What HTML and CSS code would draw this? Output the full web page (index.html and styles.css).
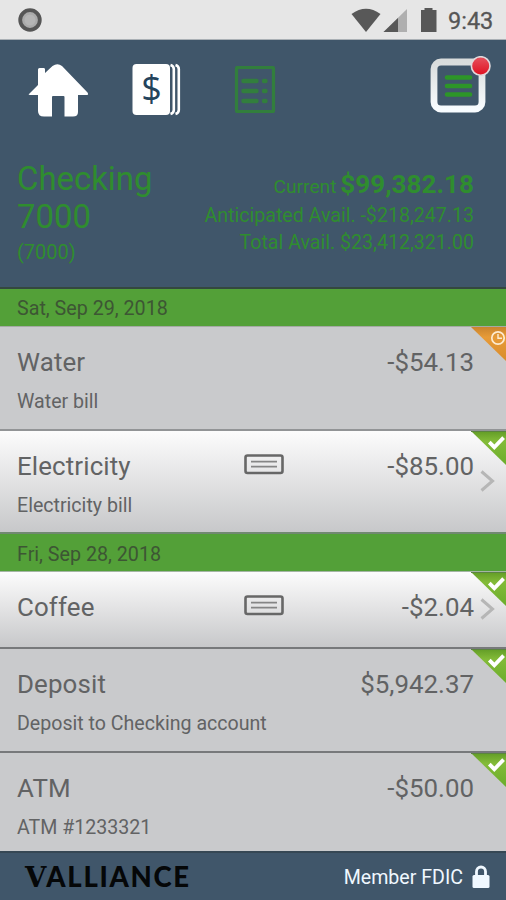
FILE: index.html
```html
<!DOCTYPE html>
<html lang="en">
<head>
<meta charset="utf-8">
<title>Checking 7000</title>
<link rel="stylesheet" href="styles.css">
</head>
<body>
<svg class="defs" aria-hidden="true">
  <defs>
    <linearGradient id="green" x1="0" y1="0" x2="0" y2="1"><stop offset="0" stop-color="#629c26"/><stop offset=".3" stop-color="#83bb38"/><stop offset="1" stop-color="#6bad2b"/></linearGradient>
    <linearGradient id="orange" x1="0" y1="0" x2="0" y2="1"><stop offset="0" stop-color="#c9842e"/><stop offset=".3" stop-color="#e79b38"/><stop offset="1" stop-color="#d98c2c"/></linearGradient>
    <linearGradient id="frame" x1="0" y1="0" x2="0" y2="1"><stop offset="0" stop-color="#d9dcdc"/><stop offset="1" stop-color="#f8fcff"/></linearGradient>
    <linearGradient id="red" x1="0" y1="0" x2="0" y2="1"><stop offset="0" stop-color="#e6535f"/><stop offset="1" stop-color="#e00f20"/></linearGradient>
  </defs>
  <symbol id="cleared" viewBox="0 0 35 34">
    <path d="M0 0H35V34Z" fill="url(#green)"/>
    <path d="M0 0H35" stroke="#5b8340" stroke-width="2"/>
    <path d="M18.300 11.200l5 5L32.600 6.600" fill="none" stroke="#fff" stroke-width="3.800"/>
  </symbol>
  <symbol id="pending" viewBox="0 0 35 34">
    <path d="M0 0H35V34Z" fill="url(#orange)"/>
    <circle cx="27" cy="11" r="6.200" fill="none" stroke="#fdebd0" stroke-width="1.700"/>
    <path d="M27 7v4.300h4" fill="none" stroke="#fdebd0" stroke-width="1.400"/>
  </symbol>
  <symbol id="check" viewBox="0 0 40 21">
    <rect x="1.500" y="1.500" width="37" height="17.500" rx="2" fill="none" stroke="#676767" stroke-width="2.600"/>
    <path d="M7 7.600h26M7 12.600h26" stroke="#858585" stroke-width="1.700"/>
  </symbol>
  <symbol id="chevron" viewBox="0 0 15 22">
    <path d="M1.500 1.500L12.500 11L1.500 20.500" fill="none" stroke="#b6b6b6" stroke-width="3"/>
  </symbol>
</svg>
<div class="screen">
  <div class="status">
    <svg width="26" height="26" viewBox="0 0 26 26"><circle cx="13" cy="13" r="9.800" fill="#aaa" stroke="#565656" stroke-width="3.800"/><circle cx="13" cy="13" r="5.500" fill="#b5b5b5"/></svg>
    <div class="status-right">
      <svg width="88" height="26" viewBox="0 0 88 26"><path d="M.5 7Q15 -3.500 29.500 7L15 25Z" fill="#585858"/><path d="M56 2V25H32.500Z" fill="#afafaf"/><path d="M47 11V25H32.500Z" fill="#585858"/><path d="M73.500 1h8v2h4v22H70V3h3.500Z" fill="#585858"/></svg>
      <span class="time">9:43</span>
    </div>
  </div>
  <header class="header">
    <nav class="nav">
      <svg class="home" width="62" height="56" viewBox="0 0 62 56"><path d="M2 30L11 21V5.500Q11 4 12.500 4H17Q18 4 18 5.500V9L25.500 2Q30.500 -1.500 35 2L60.500 28.500Q62 31 60 31H51V48Q51 52.500 46 52.500H37.500V33Q37.500 32 36.500 32H26Q25 32 25 33V52.500H17Q11 52.500 11 47V31H3Q1 31 2 30Z" fill="#fff"/></svg>
      <svg class="accounts" width="50" height="54" viewBox="0 0 50 54"><rect x=".5" y="1" width="37.500" height="51" rx="4" fill="#fff"/><path d="M38.500 2q3.300 1 3.300 4V47q0 3-3.300 4M43.500 2q3.300 1 3.300 4V47q0 3-3.300 4" fill="none" stroke="#fff" stroke-width="2.600"/><text class="dollar" x="19.500" y="37.500" text-anchor="middle">$</text></svg>
      <svg class="list" width="42" height="48" viewBox="0 0 42 48"><rect x="2.500" y="1.500" width="37" height="44" rx="1" fill="none" stroke="#327e3d" stroke-width="3.200"/><path d="M9.500 15h13M30 15h1.500M9.500 25h13M30 25h1.500M9.500 35h13M30 35h1.500" stroke="#327e3d" stroke-width="4.400" stroke-linecap="round"/></svg>
      <svg class="menu" width="62" height="60" viewBox="0 0 62 60"><rect x="4" y="6" width="48" height="47" rx="7" fill="none" stroke="url(#frame)" stroke-width="6.800"/><path d="M17 21.500h23M17 30h23M17 38.500h23" stroke="#2d9528" stroke-width="4.600" stroke-linecap="round"/><circle cx="50.700" cy="10" r="9.300" fill="url(#red)" stroke="#e0d9dc" stroke-width="1.600"/></svg>
    </nav>
    <div class="summary">
      <div class="account">
        <h1>Checking<br>7000</h1>
        <div class="number">(7000)</div>
      </div>
      <div class="balances">
        <div class="current">Current <b>$99,382.18</b></div>
        <div class="balance">Anticipated Avail. -$218,247.13</div>
        <div class="balance">Total Avail. $23,412,321.00</div>
      </div>
    </div>
  </header>
  <main>
    <h2 class="date">Sat, Sep 29, 2018</h2>
    <div class="row first">
      <div class="line"><span class="name">Water</span><span class="amount">-$54.13</span></div>
      <div class="memo">Water bill</div>
      <svg class="flag"><use href="#pending"/></svg>
    </div>
    <div class="row light">
      <div class="line"><span class="name">Electricity</span><svg class="check"><use href="#check"/></svg><span class="amount">-$85.00</span></div>
      <div class="memo">Electricity bill</div>
      <svg class="flag"><use href="#cleared"/></svg>
      <svg class="chevron"><use href="#chevron"/></svg>
    </div>
    <h2 class="date second">Fri, Sep 28, 2018</h2>
    <div class="row light short">
      <div class="line"><span class="name">Coffee</span><svg class="check"><use href="#check"/></svg><span class="amount">-$2.04</span></div>
      <svg class="flag"><use href="#cleared"/></svg>
      <svg class="chevron"><use href="#chevron"/></svg>
    </div>
    <div class="row">
      <div class="line"><span class="name">Deposit</span><span class="amount">$5,942.37</span></div>
      <div class="memo">Deposit to Checking account</div>
      <svg class="flag"><use href="#cleared"/></svg>
    </div>
    <div class="row last">
      <div class="line"><span class="name">ATM</span><span class="amount">-$50.00</span></div>
      <div class="memo">ATM #1233321</div>
      <svg class="flag"><use href="#cleared"/></svg>
    </div>
  </main>
  <footer class="footer">
    <div class="logo"><span class="initial">V</span><span>ALLIANCE</span></div>
    <div class="member"><span>Member FDIC</span>
      <svg width="18" height="24" viewBox="0 0 18 24"><rect x=".5" y="10" width="17" height="13" rx="1.500" fill="#f0f8ff"/><path d="M4.500 11V6.500a4.500 4.500 0 0 1 9 0V11" fill="none" stroke="#f0f8ff" stroke-width="2.800"/></svg>
    </div>
  </footer>
</div>
</body>
</html>
```
FILE: styles.css
```css
* { box-sizing: border-box; }
body { margin: 0; font-family: Roboto, "Liberation Sans", sans-serif; color: #626364; }
svg { display: block; flex: none; }
h1, h2 { margin: 0; font-weight: 400; }
.defs { position: absolute; width: 0; height: 0; }
.screen { width: 506px; height: 900px; overflow: hidden; display: flex; flex-direction: column; background: #c9cacc; }

.status { height: 40px; display: flex; justify-content: space-between; align-items: center; padding: 0 11px 0 17px; background: #e6e6e6; border-bottom: 1px solid #aab0b5; }
.status-right { display: flex; align-items: center; gap: 9px; }
.time { font-size: 23.5px; line-height: 28px; color: #565656; width: 47px; white-space: nowrap; padding-top: 2px; -webkit-text-stroke: .3px #565656; }

.header { height: 249px; background: #40566a; border-bottom: 2px solid #34483e; }
.nav { display: flex; align-items: flex-start; padding: 16px 14px 0 27px; height: 120px; }
.home { margin-top: 8px; }
.accounts { margin: 7px 0 0 43px; }
.dollar { font-family: "Open Sans", sans-serif; font-size: 36px; fill: #24435c; }
.list { margin: 10px 0 0 52px; }
.menu { margin-left: auto; }

.summary { display: flex; justify-content: space-between; padding: 0 32px 0 17px; color: #2f8d2f; }
h1 { font-size: 32.9px; line-height: 38px; }
.number { font-size: 20px; line-height: 24px; margin-top: 4px; }
.balances { text-align: right; padding-top: 8px; white-space: nowrap; }
.current { font-size: 19.2px; line-height: 32px; }
.current b { font-size: 26.1px; margin-left: -1px; }
.balance { font-size: 19.6px; line-height: 26.5px; }

.date { height: 37px; padding-left: 17px; font-size: 19.7px; line-height: 40px; color: #3d5634; background: #53a038; }
.date.second { height: 39px; line-height: 41px; border-top: 2px solid #718971; }
.row { position: relative; height: 104px; padding: 18px 32px 0 17px; border-top: 2px solid #77797b; background: #c9cacc; }
.row.first { height: 103px; border-top: 1px solid #a4aaa4; }
.row.light { height: 103px; border-top-color: #929496; background: linear-gradient(#fcfcfc, #e2e2e3 50%, #c7c8ca); }
.row.light.short { height: 76px; border-top: 1px solid #a4b5a4; }
.row.last { height: 100px; }
.line { display: flex; align-items: center; justify-content: space-between; position: relative; height: 34px; font-size: 25.9px; line-height: 34px; }
.name { letter-spacing: .12px; }
.memo { font-size: 19.6px; line-height: 24px; margin-top: 11px; }
.check { position: absolute; left: 227px; top: 5px; width: 40px; height: 21px; }
.flag { position: absolute; right: 0; top: 0; width: 35px; height: 34px; }
.chevron { position: absolute; right: 11px; top: 39px; width: 15px; height: 22px; }
.short .chevron { top: 26px; }

.footer { flex: 1; display: flex; justify-content: space-between; align-items: center; padding: 0 16px 0 25px; background: #40566a; border-top: 2px solid #364754; }
.logo { display: flex; align-items: baseline; font: 900 27.5px/32px Lato, sans-serif; letter-spacing: 1.7px; color: #050708; }
.logo .initial { font-family: "DejaVu Serif", serif; font-weight: 700; letter-spacing: 0; }
.member { display: flex; align-items: center; gap: 9px; font-size: 19.6px; color: #f0f8ff; white-space: nowrap; padding-top: 1px; }
```
